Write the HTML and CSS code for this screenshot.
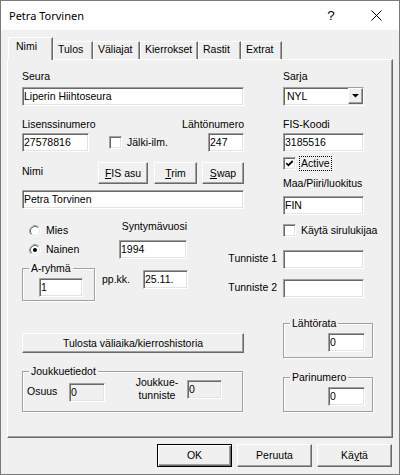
FILE: index.html
```html
<!DOCTYPE html>
<html lang="fi">
<head>
<meta charset="utf-8">
<title>Petra Torvinen</title>
<link rel="stylesheet" href="styles.css">
</head>
<body>
<div class="window">
  <div class="titlebar">
    <span class="title">Petra Torvinen</span>
    <span class="tb-btn tb-help">?</span>
    <span class="tb-btn tb-close"><svg width="11" height="11" viewBox="0 0 11 11"><path d="M0.5 0.5L10.5 10.5M10.5 0.5L0.5 10.5" stroke="#000" stroke-width="1" fill="none"/></svg></span>
  </div>

  <div class="tabs">
    <div class="tab tab-sel t-nimi">Nimi</div>
    <div class="tab t-tulos">Tulos</div>
    <div class="tab t-valiajat">Väliajat</div>
    <div class="tab t-kierrokset">Kierrokset</div>
    <div class="tab t-rastit">Rastit</div>
    <div class="tab t-extrat">Extrat</div>
  </div>

  <div class="panel">
    <div class="lcol">
      <div class="lbl">Seura</div>
      <div class="edit w-full mt4">Liperin Hiihtoseura</div>

      <div class="row-split mt12"><span>Lisenssinumero</span><span>Lähtönumero</span></div>
      <div class="row mt2">
        <div class="edit w-lis">27578816</div>
        <span class="chk ml20"></span>
        <span class="ml5 nowrap">Jälki-ilm.</span>
        <div class="edit w-lahto ml-auto">247</div>
      </div>

      <div class="row row-top mt10">
        <span class="lbl mt3">Nimi</span>
        <div class="btn b-fis ml-auto"><span><u>F</u>IS asu</span></div>
        <div class="btn b-trim ml6"><span><u>T</u>rim</span></div>
        <div class="btn b-swap ml5"><span><u>S</u>wap</span></div>
      </div>
      <div class="edit w-full mt6">Petra Torvinen</div>

      <div class="row row-top mt11">
        <div class="radios">
          <div class="radio">
            <svg width="12" height="12" viewBox="0 0 12 12"><circle cx="6" cy="6" r="5.5" fill="#fff"/><path d="M2.11 9.89A5.5 5.5 0 0 1 9.89 2.11" stroke="#a0a0a0" fill="none"/><path d="M9.89 2.11A5.5 5.5 0 0 1 2.11 9.89" stroke="#ffffff" fill="none"/><path d="M2.82 9.18A4.5 4.5 0 0 1 9.18 2.82" stroke="#696969" fill="none"/><path d="M9.18 2.82A4.5 4.5 0 0 1 2.82 9.18" stroke="#e3e3e3" fill="none"/></svg>
            <span class="ml5">Mies</span>
          </div>
          <div class="radio">
            <svg width="12" height="12" viewBox="0 0 12 12"><circle cx="6" cy="6" r="5.5" fill="#fff"/><path d="M2.11 9.89A5.5 5.5 0 0 1 9.89 2.11" stroke="#a0a0a0" fill="none"/><path d="M9.89 2.11A5.5 5.5 0 0 1 2.11 9.89" stroke="#ffffff" fill="none"/><path d="M2.82 9.18A4.5 4.5 0 0 1 9.18 2.82" stroke="#696969" fill="none"/><path d="M9.18 2.82A4.5 4.5 0 0 1 2.82 9.18" stroke="#e3e3e3" fill="none"/><circle cx="6" cy="6" r="2" fill="#000"/></svg>
            <span class="ml5">Nainen</span>
          </div>
        </div>
        <div class="synt">
          <div class="lbl ta-r">Syntymävuosi</div>
          <div class="edit mt7">1994</div>
        </div>
      </div>

      <div class="row row-top mt9">
        <div class="grp g-aryhma">
          <div class="cap">A-ryhmä</div>
          <div class="gbody gb-aryhma"><div class="edit w-a">1</div></div>
        </div>
        <span class="lbl w-ppkk mt5">pp.kk.</span>
        <div class="edit w-pp mt2">25.11.</div>
      </div>

      <div class="btn b-tulosta mt32"><span>Tulosta väliaika/kierroshistoria</span></div>

      <div class="grp g-joukkue mt18">
        <div class="cap">Joukkuetiedot</div>
        <div class="gbody gb-joukkue">
          <span class="lbl w-osuus mt7">Osuus</span>
          <div class="edit edit-dis w-osuus-in mt5">0</div>
          <span class="lbl jt-label">Joukkue-<br>tunniste</span>
          <div class="edit edit-dis w-jt mt2">0</div>
        </div>
      </div>
    </div>

    <div class="rcol">
      <div class="lbl">Sarja</div>
      <div class="edit combo mt4">
        <span class="combo-text">NYL</span>
        <span class="combo-btn"><svg width="7" height="4" viewBox="0 0 7 4"><polygon points="0,0 7,0 3.5,3.6" fill="#000"/></svg></span>
      </div>

      <div class="lbl mt12">FIS-Koodi</div>
      <div class="edit w-r mt2">3185516</div>

      <div class="chkrow mt4">
        <span class="chk chk-on mt1"><svg width="9" height="9" viewBox="0 0 9 9"><path d="M1.3 4.2L3.4 6.3L7.7 2" stroke="#000" stroke-width="1.8" fill="none"/></svg></span>
        <span class="focus">Active</span>
      </div>

      <div class="lbl clip mt6">Maa/Piiri/luokitus</div>
      <div class="edit w-r mt6">FIN</div>

      <div class="chkrow mt9">
        <span class="chk"></span>
        <span class="ml5 nowrap">Käytä sirulukijaa</span>
      </div>

      <div class="trow mt13">
        <span class="lbl t-lbl">Tunniste 1</span>
        <div class="edit w-r"></div>
      </div>
      <div class="trow mt10">
        <span class="lbl t-lbl">Tunniste 2</span>
        <div class="edit w-r"></div>
      </div>

      <div class="grp g-right mt25">
        <div class="cap">Lähtörata</div>
        <div class="gbody gb-right"><div class="edit w-small">0</div></div>
      </div>
      <div class="grp g-right mt19">
        <div class="cap">Parinumero</div>
        <div class="gbody gb-right"><div class="edit w-small">0</div></div>
      </div>
    </div>
  </div>

  <div class="footer">
    <div class="btn fbtn btn-default"><span>OK</span></div>
    <div class="btn fbtn"><span>Peruuta</span></div>
    <div class="btn fbtn"><span>Kä<u>y</u>tä</span></div>
  </div>
</div>
</body>
</html>
```

FILE: styles.css
```css
* { box-sizing: border-box; }

html, body {
  margin: 0;
  padding: 0;
  background: #f0f0f0;
}

body {
  font-family: "Liberation Sans", Arial, sans-serif;
  font-size: 10.5px;
  line-height: 13px;
  color: #000;
}

.nowrap { white-space: nowrap; }

.window {
  width: 400px;
  height: 475px;
  border: 1px solid #7a7a7a;
  background: #f0f0f0;
  display: flex;
  flex-direction: column;
}

/* title bar */
.titlebar {
  height: 29px;
  flex: none;
  background: #fff;
  display: flex;
  font-family: "Noto Sans", "Liberation Sans", sans-serif;
}
.title {
  padding: 7px 0 0 8px;
  font-size: 11px;
  line-height: 15px;
}
.tb-btn {
  display: flex;
  align-items: center;
  justify-content: center;
}
.tb-help {
  margin-left: auto;
  width: 46px;
  font-family: "Liberation Sans", sans-serif;
  font-size: 13.5px;
  line-height: 16px;
}
.tb-close { width: 45px; }

/* tabs */
.tabs {
  display: flex;
  align-items: flex-end;
  height: 22px;
  margin: 7px 0 0 7px;
  flex: none;
}
.tab {
  height: 18px;
  border: 1px solid;
  border-color: #fff #696969 transparent #fff;
  border-bottom: 0;
  box-shadow: inset -1px 0 #a0a0a0;
  padding: 1px 0 0 4px;
  white-space: nowrap;
  background: #f0f0f0;
}
.tab-sel {
  height: 23px;
  margin-bottom: -1px;
  padding: 2px 0 0 7px;
  position: relative;
  z-index: 1;
}
.t-nimi { width: 45px; }
.t-tulos { width: 40px; }
.t-valiajat { width: 47px; }
.t-kierrokset { width: 58px; }
.t-rastit { width: 43px; }
.t-extrat { width: 41px; }

/* main panel */
.panel {
  flex: none;
  margin-left: 6px;
  width: 386px;
  height: 379px;
  border: 1px solid;
  border-color: #fff #696969 #696969 #fff;
  box-shadow: inset -1px -1px #a0a0a0;
  padding: 10px 0 0 14px;
  display: grid;
  grid-template-columns: 206px 16px 129px;
  align-items: start;
}
.lcol {
  grid-column: 1 / 3;
  grid-row: 1;
  display: flex;
  flex-direction: column;
  align-items: flex-start;
}
.rcol {
  grid-column: 2 / 4;
  grid-row: 1;
  display: flex;
  flex-direction: column;
  align-items: flex-start;
  padding-left: 55px;
}

.lbl { line-height: 13px; white-space: nowrap; }
.ta-r { text-align: right; }
.clip { width: 81px; overflow: hidden; }

.row { display: flex; align-items: center; width: 222px; }
.row-top { align-items: flex-start; }
.row-split { display: flex; justify-content: space-between; width: 222px; }

/* edit boxes */
.edit {
  height: 19px;
  background: #fff;
  border: 1px solid;
  border-color: #a0a0a0 #fff #fff #a0a0a0;
  box-shadow: inset 1px 1px #696969, inset -1px -1px #e3e3e3;
  padding-left: 1px;
  line-height: 16px;
  white-space: nowrap;
  overflow: hidden;
  flex: none;
}
.edit-dis { background: #f0f0f0; }
.w-full { width: 222px; }
.w-lis { width: 67px; }
.w-lahto { width: 36px; }
.w-r { width: 81px; }
.w-a { width: 44px; }
.w-pp { width: 45px; }
.w-osuus-in { width: 36px; }
.w-jt { width: 35px; }
.w-small { width: 37px; }

/* combo */
.combo {
  width: 81px;
  display: flex;
  align-items: flex-start;
  padding-left: 0;
}
.combo-text { padding-left: 3px; flex: 1; }
.combo-btn {
  width: 15px;
  height: 16px;
  border: 1px solid;
  border-color: #fff #696969 #696969 #fff;
  box-shadow: inset -1px -1px #a0a0a0;
  background: #f0f0f0;
  display: flex;
  align-items: center;
  justify-content: center;
}

/* checkbox */
.chk {
  width: 13px;
  height: 13px;
  flex: none;
  background: #fff;
  border: 1px solid;
  border-color: #a0a0a0 #fff #fff #a0a0a0;
  box-shadow: inset 1px 1px #696969, inset -1px -1px #e3e3e3;
  display: flex;
  align-items: center;
  justify-content: center;
}
.chkrow { display: flex; align-items: flex-start; white-space: nowrap; }
.focus {
  margin-left: 3px;
  border: 1px dotted #000;
  padding: 0 1px;
  line-height: 13px;
}

/* radios */
.radios {
  width: 90px;
  margin-left: 7px;
  margin-top: 2px;
  display: flex;
  flex-direction: column;
  gap: 2px;
}
.radio { height: 17px; display: flex; align-items: center; }
.radio svg { flex: none; }
.synt { width: 68px; display: flex; flex-direction: column; }
.synt .edit { width: 68px; }

/* group boxes */
.grp {
  border: 1px solid #a0a0a0;
  box-shadow: 1px 1px 0 #fff, inset 1px 1px 0 #fff;
  flex: none;
}
.cap {
  width: fit-content;
  margin: -7px 0 0 6px;
  padding: 0 2px;
  background: #f0f0f0;
  line-height: 13px;
  white-space: nowrap;
}
.gbody { display: flex; align-items: flex-start; }
.g-aryhma { width: 73px; }
.gb-aryhma { padding: 3px 11px 3px 16px; }
.w-ppkk { width: 41px; margin-left: 7px; }
.g-joukkue { width: 221px; }
.gb-joukkue { padding: 0 0 9px 4px; }
.w-osuus { width: 42px; }
.jt-label {
  width: 60px;
  margin-left: 22px;
  margin-top: -2px;
  text-align: center;
}
.g-right { width: 90px; }
.gb-right { justify-content: flex-end; padding: 3px 7px 5px 0; }

.trow {
  display: flex;
  align-items: flex-start;
  justify-content: flex-end;
  width: 145px;
  margin-left: -55px;
  padding-right: 9px;
}
.t-lbl { margin-right: 6px; margin-top: 2px; }

/* buttons */
.btn {
  height: 22px;
  border: 1px solid;
  border-color: #fff #696969 #696969 #fff;
  box-shadow: inset -1px -1px #a0a0a0;
  background: #f0f0f0;
  display: flex;
  align-items: center;
  justify-content: center;
  white-space: nowrap;
  flex: none;
}
.b-fis { width: 50px; }
.b-trim { width: 43px; }
.b-swap { width: 42px; }
.b-tulosta { width: 222px; height: 20px; }

.footer {
  display: flex;
  justify-content: flex-end;
  gap: 5px;
  margin-top: 6px;
  padding-right: 7px;
}
.fbtn { width: 75px; height: 23px; }
.btn-default {
  border-color: #000;
  box-shadow: inset 1px 1px #fff, inset -1px -1px #696969, inset -2px -2px #a0a0a0;
}

/* spacing helpers */
.mt1 { margin-top: 1px; }
.mt2 { margin-top: 2px; }
.mt3 { margin-top: 3px; }
.mt4 { margin-top: 4px; }
.mt5 { margin-top: 5px; }
.mt6 { margin-top: 6px; }
.mt7 { margin-top: 7px; }
.mt9 { margin-top: 9px; }
.mt10 { margin-top: 10px; }
.mt11 { margin-top: 11px; }
.mt12 { margin-top: 12px; }
.mt13 { margin-top: 13px; }
.mt18 { margin-top: 18px; }
.mt19 { margin-top: 19px; }
.mt25 { margin-top: 25px; }
.mt32 { margin-top: 32px; }
.ml5 { margin-left: 5px; }
.ml6 { margin-left: 6px; }
.ml20 { margin-left: 20px; }
.ml-auto { margin-left: auto; }
```
